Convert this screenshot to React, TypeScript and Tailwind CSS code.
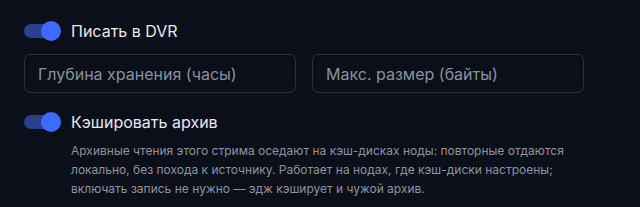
import React, { useState } from 'react';

const font = { fontFamily: 'Inter, "Noto Sans", sans-serif' };

const Toggle: React.FC<{ checked: boolean; onChange: () => void }> = ({ checked, onChange }) => (
  <button
    onClick={onChange}
    className="relative w-[34px] h-[14px] shrink-0 rounded-full bg-[#2c3f8f] outline-none"
  >
    <span
      className={`absolute top-[-3px] w-5 h-5 rounded-full bg-[#3d6bff] transition-all ${checked ? 'left-[17px]' : 'left-[-3px]'}`}
    />
  </button>
);

export default function App() {
  const [dvr, setDvr] = useState(true);
  const [cache, setCache] = useState(true);

  return (
    <div className="w-[640px] h-[207px] bg-[#0b0f19] px-6 pt-[21px]" style={font}>
      <label className="flex items-center h-5 cursor-pointer">
        <Toggle checked={dvr} onChange={() => setDvr(!dvr)} />
        <span className="ml-[13px] text-[16px] text-[#e6e8ee]">Писать в DVR</span>
      </label>

      <div className="grid grid-cols-2 gap-4 mt-[13px] w-[560px]">
        <input
          placeholder="Глубина хранения (часы)"
          className="h-[39px] rounded-md border border-[#2b303c] bg-transparent px-[13px] text-[16px] text-[#e6e8ee] placeholder:text-[#8a919e] outline-none"
        />
        <input
          placeholder="Макс. размер (байты)"
          className="h-[39px] rounded-md border border-[#2b303c] bg-transparent px-[13px] text-[16px] text-[#e6e8ee] placeholder:text-[#8a919e] outline-none"
        />
      </div>

      <label className="flex items-center h-5 mt-[19px] cursor-pointer">
        <Toggle checked={cache} onChange={() => setCache(!cache)} />
        <span className="ml-[13px] text-[16px] text-[#e6e8ee]">Кэшировать архив</span>
      </label>

      <p className="ml-[47px] mt-[9px] w-[500px] text-[12px] leading-[19px] text-[#8e939e]">
        Архивные чтения этого стрима оседают на кэш-дисках ноды: повторные отдаются локально, без похода к источнику. Работает на нодах, где кэш-диски настроены; включать запись не нужно — эдж кэширует и чужой архив.
      </p>
    </div>
  );
}
